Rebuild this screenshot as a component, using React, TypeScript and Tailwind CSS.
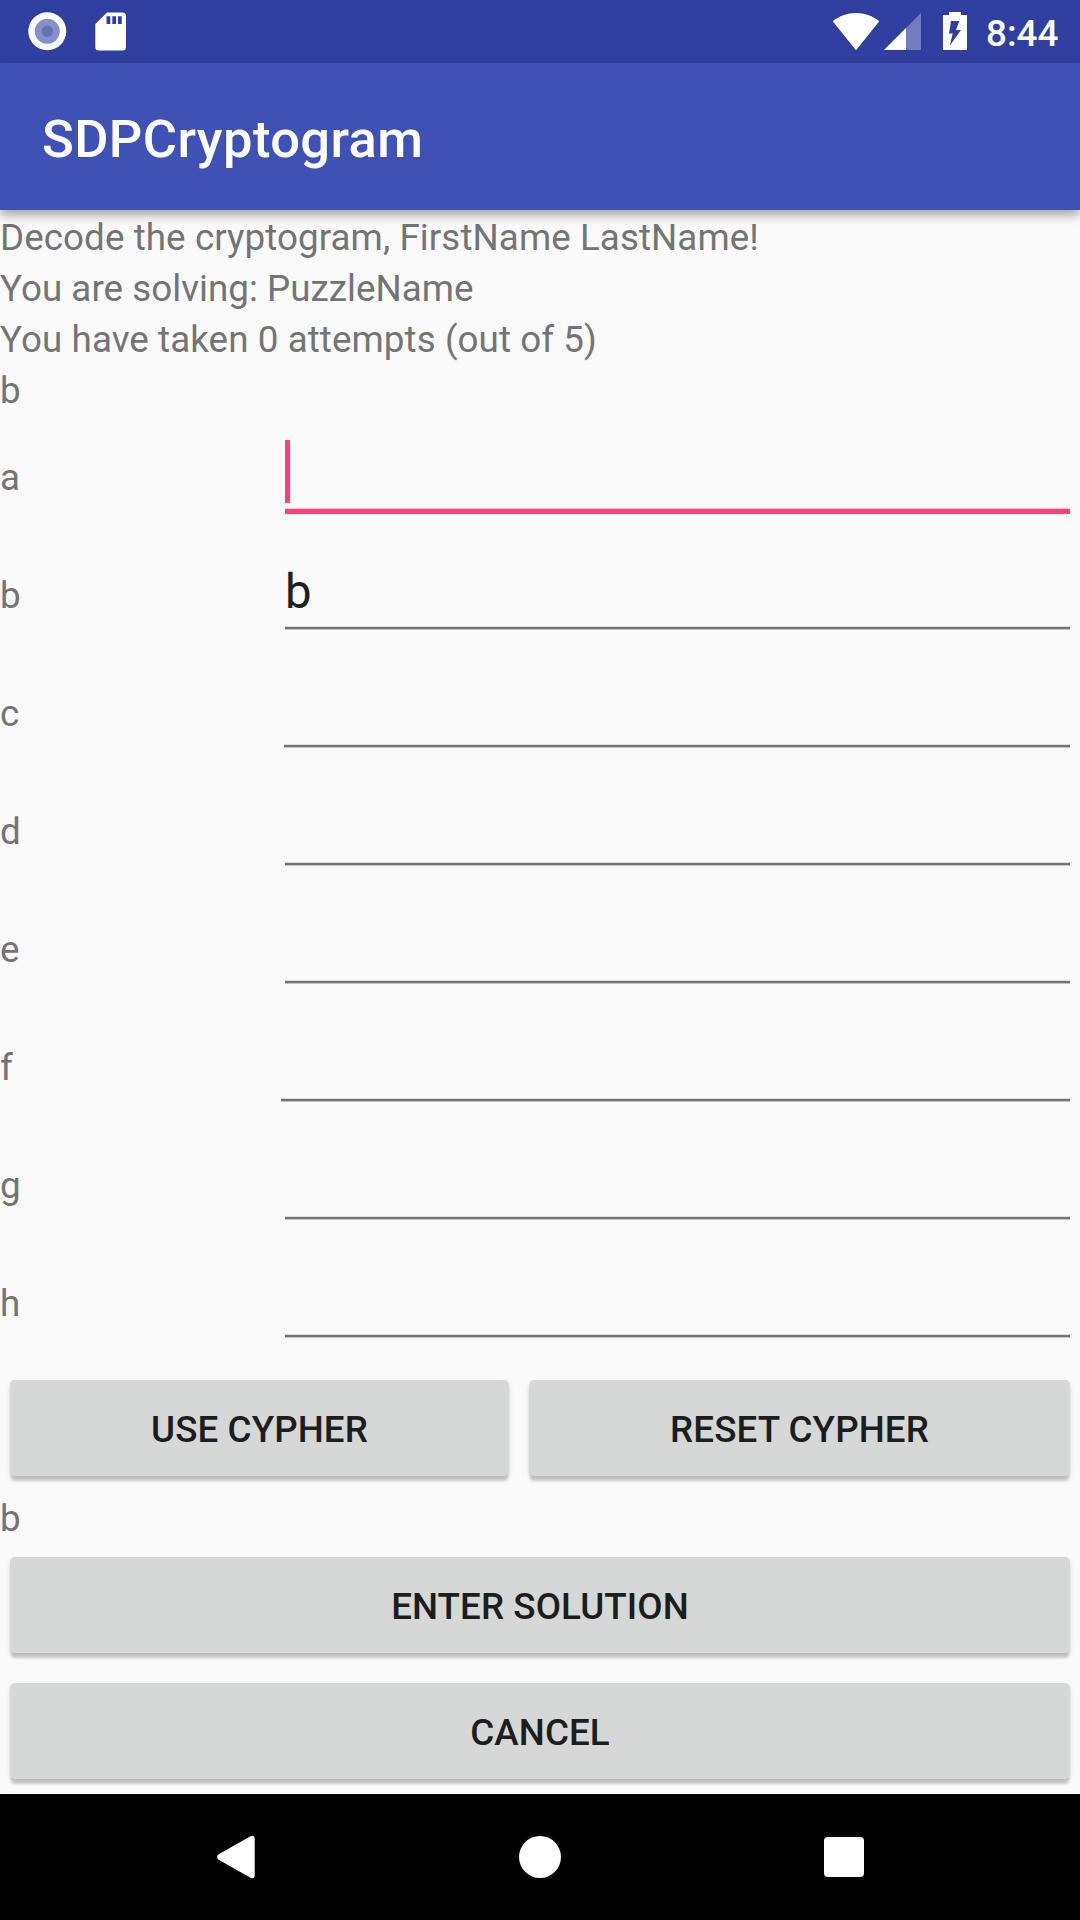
import React from "react";

const mappings = [
  { letter: "a", value: "", width: "w-[785px]", focused: true },
  { letter: "b", value: "b", width: "w-[785px]" },
  { letter: "c", value: "", width: "w-[786px]" },
  { letter: "d", value: "", width: "w-[785px]" },
  { letter: "e", value: "", width: "w-[785px]" },
  { letter: "f", value: "", width: "w-[789px]" },
  { letter: "g", value: "", width: "w-[785px]" },
  { letter: "h", value: "", width: "w-[785px]" },
];

function StatusBar() {
  return (
    <header className="flex h-[63px] items-start justify-between bg-[#303f9f]">
      <svg width="140" height="63" viewBox="0 0 140 63">
        <circle cx="47.3" cy="31.3" r="19" fill="#fff" />
        <circle cx="47.3" cy="31.3" r="12.5" fill="#8790c9" />
        <circle cx="47.3" cy="31.3" r="5.7" fill="#6670b8" />
        <path
          fill="#fff"
          fillRule="evenodd"
          d="M107 12.5H122.5Q126 12.5 126 16V47Q126 50.5 122.500 50.5H98.800Q95.300 50.5 95.300 47V24ZM106.500 16.200V24H110.300V16.200ZM112.300 16.200V24H116.100V16.200ZM118 16.200V24H121.800V16.200Z"
        />
      </svg>
      <div className="flex">
        <svg width="150" height="63" viewBox="830 0 150 63">
          <path fill="#fff" d="M832.700 21.300C846 10.300 866 10.300 879.300 21.300L856 50.300Z" />
          <path fill="#fff" fillOpacity=".32" d="M884 50L921 13V50Z" />
          <path fill="#fff" d="M884 50L906 28V50Z" />
          <path
            fill="#fff"
            fillRule="evenodd"
            d="M949 12H961V15H967V50H943V15H949ZM951 21L949 33.500H952.700L949.700 45.800L961 30H956L959.300 21Z"
          />
        </svg>
        <span className="mt-[11px] w-[100px] pl-[6px] text-[36.75px] leading-[46px] font-medium text-white">8:44</span>
      </div>
    </header>
  );
}

function RaisedButton({ label, className }: { label: string; className: string }) {
  return (
    <button
      className={`h-[96px] rounded-[5px] bg-[#d6d8d7] pt-[3px] text-[36.75px] leading-[48px] font-medium tracking-[0.08px] text-[#1d1d1d] shadow-[0_6px_3px_-1px_rgba(0,0,0,0.18),0_2px_5px_rgba(0,0,0,0.12)] ${className}`}
    >
      {label}
    </button>
  );
}

export default function App() {
  return (
    <div className="flex h-[1920px] w-[1080px] flex-col overflow-hidden bg-[#fafafa] font-['Roboto',sans-serif]">
      <StatusBar />
      <div className="relative z-10 flex h-[147px] items-center bg-[#3f51b5] pl-[42px] shadow-[0_5px_10px_rgba(0,0,0,0.35)]">
        <h1 className="pt-[5px] text-[52.5px] leading-[62px] font-medium tracking-[0.4px] text-white">SDPCryptogram</h1>
      </div>
      <main className="flex h-[1584px] flex-col text-[36.75px] leading-[51px] tracking-[0.08px] text-[#747474]">
        <div className="h-[204px] pt-[2px]">
          <p>Decode the cryptogram, FirstName LastName!</p>
          <p className="tracking-[0.03px]">You are solving: PuzzleName</p>
          <p>You have taken 0 attempts (out of 5)</p>
          <p>b</p>
        </div>
        <div className="flex flex-col">
          {mappings.map((m) => (
            <div key={m.letter} className="flex h-[118px] justify-between pr-[10px]">
              <span className="pt-[38px]">{m.letter}</span>
              <div className={`flex flex-col ${m.width}`}>
                <div className="flex h-[94px] shrink-0 items-start pt-[26px] text-[47.25px] leading-[63px] text-[#202020]">
                  {m.focused ? <i className="h-[63px] w-[5px] bg-[#ff4081]" /> : <span className="pt-[3px]">{m.value}</span>}
                </div>
                {m.focused ? (
                  <div className="h-[6px] border-t border-[#fdc3d6] bg-[#ff4081]" />
                ) : (
                  <div className="h-[4px] border-t border-b border-t-[#dcdcdc] border-b-[#c4c4c4] bg-[#737373]" />
                )}
              </div>
            </div>
          ))}
        </div>
        <div className="flex justify-between px-[10px] pt-[22px]">
          <RaisedButton label="USE CYPHER" className="w-[499px]" />
          <RaisedButton label="RESET CYPHER" className="w-[541px]" />
        </div>
        <p className="mt-[17px] h-[48px]">b</p>
        <div className="flex flex-col gap-[30px] px-[10px] pt-[16px]">
          <RaisedButton label="ENTER SOLUTION" className="w-full" />
          <RaisedButton label="CANCEL" className="w-full" />
        </div>
      </main>
      <nav className="flex h-[126px] items-center justify-between bg-black pr-[216px] pl-[216px]">
        <svg width="40" height="44" viewBox="0 0 40 44">
          <path fill="#fff" d="M2.300 19.500L34.500 1.200Q38.500 -.5 38.700 3.500V40.500Q38.500 44.500 34.500 42.800L2.300 24.500Q-.2 22 2.300 19.500Z" />
        </svg>
        <div className="size-[42px] rounded-full bg-white" />
        <div className="size-[40px] rounded-[4px] bg-white" />
      </nav>
    </div>
  );
}
